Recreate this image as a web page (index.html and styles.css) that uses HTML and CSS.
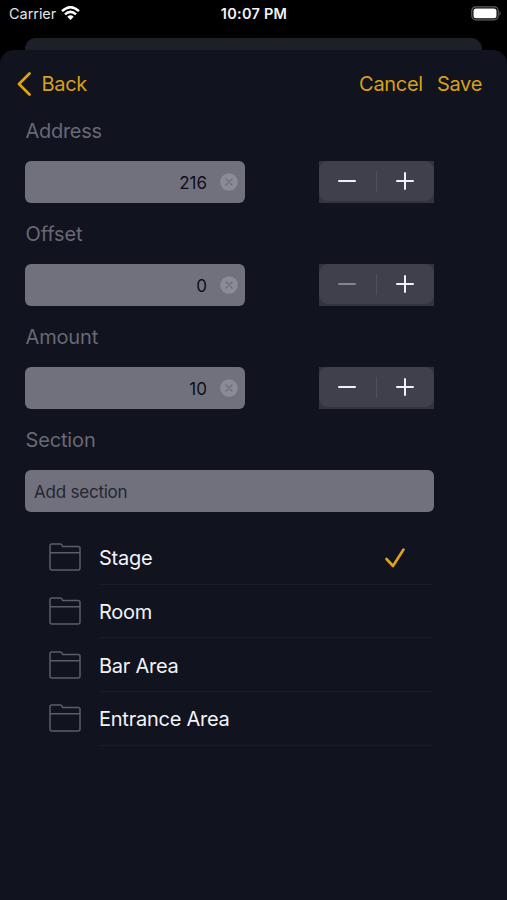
FILE: index.html
```html
<!DOCTYPE html>
<html lang="en">
<head>
<meta charset="utf-8">
<title>Fixture</title>
<link rel="stylesheet" href="styles.css">
</head>
<body>
<svg class="defs" aria-hidden="true">
  <symbol id="folder" viewBox="0 0 32 28"><path d="M1 25V2.800Q1 1 2.800 1H11.500Q13 1 13.500 3.400H29.200Q31 3.400 31 5.200V25Q31 27 29 27H3Q1 27 1 25ZM1 9.700H31"/></symbol>
  <symbol id="clear" viewBox="0 0 18 18"><circle cx="9" cy="9" r="8.800" fill="#8b8b97"/><path d="M6 6L12 12M12 6L6 12" stroke="#6d6d7a" stroke-width="1.300" stroke-linecap="round"/></symbol>
  <symbol id="minus" viewBox="0 0 18 18"><path d="M1 9H17"/></symbol>
  <symbol id="plus" viewBox="0 0 18 18"><path d="M1 9H17M9 1V17"/></symbol>
</svg>
<header class="status">
  <div class="carrier"><span class="carrier-name">Carrier</span>
    <svg class="wifi" viewBox="0 0 19 14"><path d="M1 5.200Q9.500-2.600 18 5.200M4 8.400Q9.500 3.300 15 8.400" fill="none" stroke="#fff" stroke-width="2.500"/><path d="M6.300 10.700Q9.500 7.900 12.700 10.700L9.500 14Z" fill="#fff"/></svg>
  </div>
  <div class="time">10:07 PM</div>
  <svg class="battery" viewBox="0 0 31 15"><rect x=".8" y=".8" width="26.400" height="13" rx="4" fill="none" stroke="#606060" stroke-width="1.200"/><rect x="2.500" y="2.400" width="23" height="9.800" rx="2.500" fill="#fff"/><path d="M28.500 5Q31 7.300 28.500 9.700Z" fill="#606060"/></svg>
</header>
<div class="back-sheet"></div>
<main class="sheet">
  <nav class="nav">
    <div class="back"><svg class="chevron" viewBox="0 0 14 24"><path d="M12.500 1.500L2 12L12.500 22.500"/></svg><span class="back-text">Back</span></div>
    <div class="actions"><span class="cancel">Cancel</span><span class="save">Save</span></div>
  </nav>
  <form class="form">
    <section class="group">
      <div class="label address">Address</div>
      <div class="controls">
        <div class="field number"><span>216</span><svg class="clear"><use href="#clear"/></svg></div>
        <div class="stepper"><div class="stepper-body"><svg class="sign"><use href="#minus"/></svg><i class="divider"></i><svg class="sign"><use href="#plus"/></svg></div></div>
      </div>
    </section>
    <section class="group">
      <div class="label offset">Offset</div>
      <div class="controls">
        <div class="field number"><span>0</span><svg class="clear"><use href="#clear"/></svg></div>
        <div class="stepper"><div class="stepper-body"><svg class="sign disabled"><use href="#minus"/></svg><i class="divider"></i><svg class="sign"><use href="#plus"/></svg></div></div>
      </div>
    </section>
    <section class="group">
      <div class="label amount">Amount</div>
      <div class="controls">
        <div class="field number"><span>10</span><svg class="clear"><use href="#clear"/></svg></div>
        <div class="stepper"><div class="stepper-body"><svg class="sign"><use href="#minus"/></svg><i class="divider"></i><svg class="sign"><use href="#plus"/></svg></div></div>
      </div>
    </section>
    <section class="group">
      <div class="label section">Section</div>
      <div class="field add"><span>Add section</span></div>
    </section>
    <ul class="list">
      <li class="row"><svg class="folder"><use href="#folder"/></svg><div class="row-body"><span>Stage</span><svg class="check" viewBox="0 0 20 20"><path d="M1.500 11L8 18L18.500 1.500"/></svg></div></li>
      <li class="row"><svg class="folder"><use href="#folder"/></svg><div class="row-body"><span>Room</span></div></li>
      <li class="row"><svg class="folder"><use href="#folder"/></svg><div class="row-body"><span>Bar Area</span></div></li>
      <li class="row"><svg class="folder"><use href="#folder"/></svg><div class="row-body"><span>Entrance Area</span></div></li>
    </ul>
  </form>
</main>
</body>
</html>
```
FILE: styles.css
```css
* { box-sizing: border-box; }
body {
  margin: 0;
  height: 900px;
  display: flex;
  flex-direction: column;
  overflow: hidden;
  background: #000;
  font-family: Inter, "Liberation Sans", sans-serif;
  color: #f3f3f8;
}
svg { display: block; flex: none; }
.defs { position: absolute; width: 0; height: 0; }
.status {
  height: 38px;
  padding: 0 5px 11px 9px;
  display: grid;
  grid-template-columns: 1fr auto 1fr;
  align-items: center;
  font-size: 14.500px;
}
.carrier { display: flex; align-items: center; gap: 5px; color: #e4e4e4; letter-spacing: -0.05px; }
.wifi { width: 19px; height: 14px; margin-top: -1px; }
.time { font-weight: 600; letter-spacing: 0.25px; margin-right: 3px; }
.battery { width: 31px; height: 15px; justify-self: end; margin-top: -1px; }
.back-sheet { height: 12px; margin: 0 25px; background: #1e2028; border-radius: 11px 11px 0 0; }
.sheet { flex: 1; background: #11131e; border-radius: 14px 14px 0 0; }
.nav {
  height: 61px;
  padding: 7px 25px 0 17px;
  display: flex;
  align-items: center;
  justify-content: space-between;
  color: #d9a016;
  font-size: 20px;
  letter-spacing: -0.3px;
}
.back, .actions { display: flex; align-items: center; }
.back { gap: 10.500px; }
.actions { gap: 14px; }
.cancel { letter-spacing: -0.3px; }
.chevron { width: 14px; height: 24px; fill: none; stroke: #e0a50d; stroke-width: 2.700; stroke-linecap: round; stroke-linejoin: round; }
.form { width: 409px; margin-left: 25px; }
.group { height: 103px; }
.label { height: 50px; padding-left: 0.500px; line-height: 41px; font-size: 20px; letter-spacing: -0.3px; color: #686976; }
.offset { letter-spacing: -0.1px; }
.amount, .section { letter-spacing: -0.15px; }
.controls { display: flex; justify-content: space-between; }
.field { height: 42px; border-radius: 6px; background: #71717d; display: flex; align-items: center; font-size: 17px; }
.number { width: 220px; justify-content: flex-end; gap: 13px; padding-right: 7px; color: #0d0e19; }
.number span { padding-top: 1px; }
.clear { width: 18px; height: 18px; }
.add { padding-left: 9px; padding-top: 1px; color: #242532; letter-spacing: -0.22px; }
.stepper { width: 115px; height: 42px; padding-bottom: 2px; background: #333440; }
.stepper-body { height: 40px; border-radius: 9px; background: #403f4c; display: flex; align-items: center; justify-content: space-between; padding: 0 20px 0 19px; }
.sign { width: 18px; height: 18px; fill: none; stroke: #f0f0f7; stroke-width: 2; stroke-linecap: round; }
.disabled { stroke: #85848f; }
.divider { width: 1px; height: 21px; background: #504f5b; }
.list { list-style: none; margin: 0; padding: 8px 2px 0 24px; }
.row { height: 53.700px; display: flex; align-items: center; gap: 18px; }
.folder { width: 32px; height: 28px; margin-top: -1px; fill: none; stroke: #5c5d69; stroke-width: 1.500; stroke-linejoin: round; }
.row-body { flex: 1; height: 100%; display: flex; align-items: center; justify-content: space-between; padding: 2px 27px 0 0; border-bottom: 1px solid #191b25; font-size: 20px; letter-spacing: -0.25px; }
.check { width: 20px; height: 20px; fill: none; stroke: #dca41b; stroke-width: 2.600; stroke-linecap: round; stroke-linejoin: round; }
```
